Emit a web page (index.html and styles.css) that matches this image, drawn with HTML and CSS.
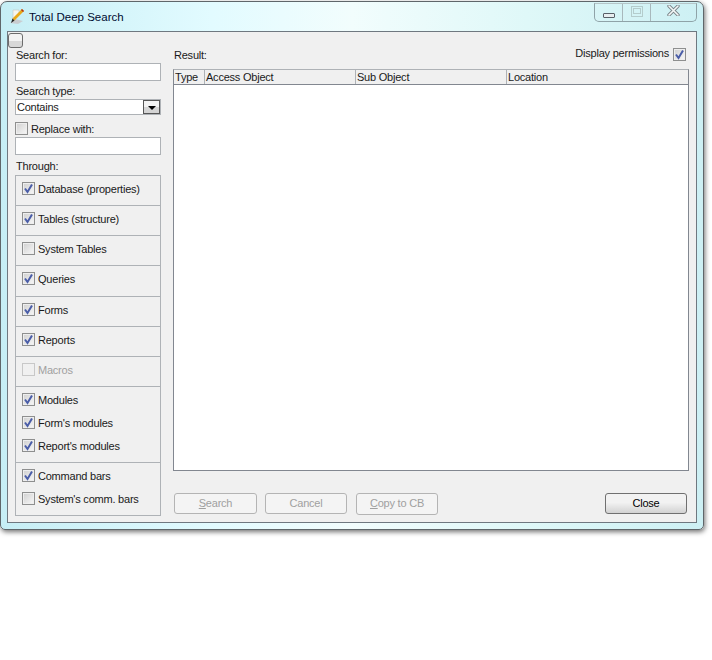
FILE: index.html
```html
<!DOCTYPE html>
<html lang="en">
<head>
<meta charset="utf-8">
<title>Total Deep Search</title>
<link rel="stylesheet" href="styles.css">
</head>
<body>
<div class="window">
  <header class="titlebar">
    <svg class="app-icon" width="16" height="17" viewBox="0 0 16 17">
      <path d="M1 15 L6 11 L14 13 L9 16 Z" fill="#c9ccd0"/>
      <path d="M4 2 H10 V5 L5 11 H4 Z" fill="#f6f6ee" stroke="#c8c8c0" stroke-width=".6"/>
      <path d="M13 1 L15 3 L5.5 12.5 L3.5 10.5 Z" fill="#e8a818"/>
      <path d="M13 1 L15 3 L14 4 L12 2 Z" fill="#b03018"/>
      <path d="M3.5 10.5 L5.5 12.5 L2 15 Z" fill="#222"/>
    </svg>
    <span class="title">Total Deep Search</span>
    <div class="caption">
      <div class="cap cap-min"><span class="min-bar"></span></div>
      <div class="cap cap-max"><span class="max-box"></span></div>
      <div class="cap cap-close">
        <svg width="13" height="11" viewBox="0 0 13 11"><path d="M2 1 L11 10 M11 1 L2 10" stroke="#7a8488" stroke-width="3.4" stroke-linecap="round" fill="none"/><path d="M2 1 L11 10 M11 1 L2 10" stroke="#f4f8f8" stroke-width="1.6" stroke-linecap="round" fill="none"/></svg>
      </div>
    </div>
  </header>
  <main class="client">
    <button class="tiny" type="button" aria-label="Menu"></button>
    <div class="columns">
      <aside class="side">
        <label class="lbl lbl-first">Search for:</label>
        <div class="field"></div>
        <label class="lbl lbl-type">Search type:</label>
        <div class="combo"><span>Contains</span><span class="arrow"><i></i></span></div>
        <div class="check replace"><span class="box"></span><span>Replace with:</span></div>
        <div class="field field-replace"></div>
        <label class="lbl lbl-through">Through:</label>
        <div class="group">
          <div class="sect s30"><div class="check"><span class="box on"><svg width="11" height="11" viewBox="0 0 11 11"><path d="M2 5.5 L4.5 9 L9 1.5" class="tick"/></svg></span><span>Database (properties)</span></div></div>
          <div class="sect s30"><div class="check"><span class="box on"><svg width="11" height="11" viewBox="0 0 11 11"><path d="M2 5.5 L4.5 9 L9 1.5" class="tick"/></svg></span><span>Tables (structure)</span></div></div>
          <div class="sect s30"><div class="check"><span class="box"></span><span>System Tables</span></div></div>
          <div class="sect s31"><div class="check"><span class="box on"><svg width="11" height="11" viewBox="0 0 11 11"><path d="M2 5.5 L4.5 9 L9 1.5" class="tick"/></svg></span><span>Queries</span></div></div>
          <div class="sect s30"><div class="check"><span class="box on"><svg width="11" height="11" viewBox="0 0 11 11"><path d="M2 5.5 L4.5 9 L9 1.5" class="tick"/></svg></span><span>Forms</span></div></div>
          <div class="sect s30"><div class="check"><span class="box on"><svg width="11" height="11" viewBox="0 0 11 11"><path d="M2 5.5 L4.5 9 L9 1.5" class="tick"/></svg></span><span>Reports</span></div></div>
          <div class="sect s30"><div class="check disabled"><span class="box"></span><span>Macros</span></div></div>
          <div class="sect s76">
            <div class="check"><span class="box on"><svg width="11" height="11" viewBox="0 0 11 11"><path d="M2 5.5 L4.5 9 L9 1.5" class="tick"/></svg></span><span>Modules</span></div>
            <div class="check"><span class="box on"><svg width="11" height="11" viewBox="0 0 11 11"><path d="M2 5.5 L4.5 9 L9 1.5" class="tick"/></svg></span><span>Form's modules</span></div>
            <div class="check"><span class="box on"><svg width="11" height="11" viewBox="0 0 11 11"><path d="M2 5.5 L4.5 9 L9 1.5" class="tick"/></svg></span><span>Report's modules</span></div>
          </div>
          <div class="sect s-last">
            <div class="check"><span class="box on"><svg width="11" height="11" viewBox="0 0 11 11"><path d="M2 5.5 L4.5 9 L9 1.5" class="tick"/></svg></span><span>Command bars</span></div>
            <div class="check"><span class="box"></span><span>System's comm. bars</span></div>
          </div>
        </div>
      </aside>
      <section class="content">
        <div class="result-head">
          <span>Result:</span>
          <div class="check perm"><span>Display permissions</span><span class="box on"><svg width="11" height="11" viewBox="0 0 11 11"><path d="M2 5.5 L4.5 9 L9 1.5" class="tick"/></svg></span></div>
        </div>
        <div class="grid">
          <div class="grid-head">
            <span class="col col-type">Type</span>
            <span class="col col-wide">Access Object</span>
            <span class="col col-wide">Sub Object</span>
            <span class="col col-loc">Location</span>
          </div>
        </div>
        <div class="actions">
          <button class="btn btn-search" type="button" disabled><u>S</u>earch</button>
          <button class="btn btn-cancel" type="button" disabled>Cancel</button>
          <button class="btn btn-copy" type="button" disabled><u>C</u>opy to CB</button>
          <button class="btn btn-close" type="button">Close</button>
        </div>
      </section>
    </div>
  </main>
</div>
</body>
</html>
```
FILE: styles.css
```css
* { box-sizing: border-box; }
html, body { margin: 0; padding: 0; background: #fff; }
body { width: 712px; height: 660px; overflow: hidden; padding-top: 1px; font-family: "Liberation Sans", Arial, sans-serif; font-size: 11px; letter-spacing: -.22px; color: #1a1a1a; }

.window {
  width: 704px; height: 529px;
  border: 1px solid #5f666a; border-radius: 7px 7px 5px 5px;
  background: linear-gradient(90deg, #c6eef5 0, #e2fbff 30%, #f2fdfd 50%, #dff8f8 75%, #cdf0f4 100%);
  box-shadow: 1px 2px 5px rgba(0,0,0,.55);
  display: flex; flex-direction: column;
}
.titlebar { height: 29px; display: flex; align-items: flex-start; padding-left: 8px; flex: none; }
.app-icon { margin-top: 6px; flex: none; }
.title { margin: 8px 0 0 4px; font-size: 11.5px; letter-spacing: 0; color: #000a30; line-height: 14px; }
.caption { margin-left: auto; margin-right: 6px; display: flex; width: 103px; height: 19px; margin-top: 1px; border: 1px solid #8fa3a8; border-top-color: #b5c5c8; border-radius: 0 0 5px 5px; }
.cap { display: flex; align-items: center; justify-content: center; height: 100%; }
.cap-min { width: 28px; border-right: 1px solid #a8b8bc; }
.cap-max { width: 28px; border-right: 1px solid #a8b8bc; }
.cap-close { width: 45px; }
.min-bar { width: 12px; height: 5px; margin-top: 5px; border: 1px solid #596068; background: #e8eef0; border-radius: 1px; }
.max-box { width: 12px; height: 11px; margin-top: -3px; border: 1px solid #b4cccc; display: flex; align-items: center; justify-content: center; }
.max-box::after { content: ""; width: 6px; height: 4px; border: 1px solid #b4cccc; }
.cap-close svg { margin-top: -4px; }

.client {
  width: 690px; height: 492px; margin-left: 6px; flex: none;
  border: 1px solid #6f7880; background: #f0f0f0;
  padding: 1px 0 0 0;
}
.tiny { display: block; width: 15px; height: 15px; margin: 0; padding: 0; border: 1px solid #6c6c6c; border-radius: 3px; background: linear-gradient(#f3f3f3 50%, #d8d8d8 50%); }
.columns { display: flex; padding-left: 7px; }
.side { width: 146px; flex: none; display: flex; flex-direction: column; }
.lbl { display: block; line-height: 14px; padding-left: 1px; }
.lbl-first { margin-top: 0; }
.field { height: 18px; margin-top: 1px; background: #fff; border: 1px solid #aeb2b6; }
.lbl-type { margin-top: 3px; }
.combo { height: 16px; margin-top: 1px; background: #fff; border: 1px solid #aeb2b6; display: flex; align-items: center; justify-content: space-between; padding-left: 1px; line-height: 14px; }
.arrow { width: 17px; height: 14px; border: 1px solid #555; background: linear-gradient(#f2f2f2 50%, #d4d4d4 50%); display: flex; align-items: center; justify-content: center; }
.arrow i { width: 0; height: 0; border: 4px solid transparent; border-top: 4px solid #000; border-bottom: 0; margin-top: 2px; }
.check { display: flex; align-items: center; gap: 3px; line-height: 14px; }
.box { width: 13px; height: 13px; flex: none; margin-top: -2px; border: 1px solid #8e8f8f; background: linear-gradient(135deg, #cfcfcf, #f8f8f8); box-shadow: inset 0 0 0 1px #eeeeee; display: flex; align-items: center; justify-content: center; }
.box svg { display: block; }
.tick { fill: none; stroke: #4a5da8; stroke-width: 2; }
.replace { margin-top: 7px; height: 14px; }
.field-replace { margin-top: 1px; }
.lbl-through { margin-top: 4px; }
.group { margin-top: 2px; height: 341px; border: 1px solid #aeb2b6; }
.sect { border-bottom: 1px solid #aeb2b6; padding: 6px 0 0 6px; }
.s30 { height: 30px; }
.s31 { height: 31px; }
.s76 { height: 76px; display: flex; flex-direction: column; gap: 9px; }
.s-last { border-bottom: 0; display: flex; flex-direction: column; gap: 9px; }
.disabled { color: #a0a0a0; }
.disabled .box { border-color: #c8c8c8; background: #f0f0f0; box-shadow: none; }

.content { width: 516px; margin-left: 12px; flex: none; display: flex; flex-direction: column; }
.result-head { height: 21px; padding: 0 3px 0 0; display: flex; justify-content: space-between; line-height: 14px; width: 515px; margin-left: 1px; }
.perm { gap: 4px; margin-top: -2px; height: 14px; }
.perm .box { margin-top: 2px; }
.grid { height: 402px; border: 1px solid #828790; border-top-color: #aeb2b6; background: #fff; }
.grid-head { height: 15px; display: flex; background: #f0f0f0; border-bottom: 1px solid #828790; line-height: 14px; }
.col { padding-left: 1px; border-right: 1px solid #aeb2b6; }
.col-type { width: 31px; }
.col-wide { width: 151px; }
.col-loc { flex: 1; border-right: 0; }
.actions { display: flex; margin-top: 22px; align-items: flex-start; }
.btn { width: 82px; height: 21px; margin: 0; padding: 0 0 2px; font: inherit; letter-spacing: inherit; color: #a0a0a0; border: 1px solid #b4b4b4; border-radius: 3px; background: #f4f4f4; }
.btn-search { width: 83px; margin-left: 1px; margin-right: 8px; }
.btn-cancel { margin-right: 9px; }
.btn-copy { height: 22px; }
.btn-close { margin-left: auto; margin-right: 2px; color: #000; border-color: #707070; background: linear-gradient(#f2f2f2 45%, #d2d2d2 100%); }
```
